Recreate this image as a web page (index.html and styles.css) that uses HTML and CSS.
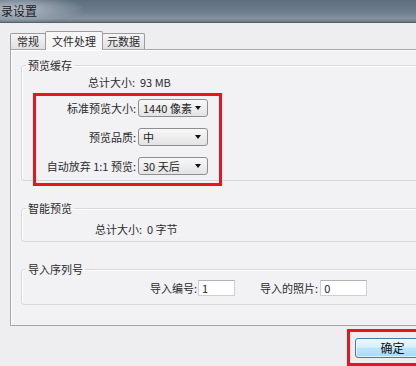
FILE: index.html
```html
<!DOCTYPE html>
<html lang="zh-CN">
<head>
<meta charset="utf-8">
<title>目录设置</title>
<link rel="stylesheet" href="styles.css">
</head>
<body>
<div class="window">
  <div class="titlebar"><span class="title">录设置</span></div>

  <div class="tabs">
    <div class="tab">常规</div>
    <div class="tab active">文件处理</div>
    <div class="tab tab-narrow">元数据</div>
  </div>

  <div class="panel">
    <fieldset class="group g1">
      <legend>预览缓存</legend>
      <div class="info-row"><span class="info-label">总计大小:</span><span>93 MB</span></div>
      <div class="highlight hl-form">
        <div class="form-grid">
          <span class="form-label">标准预览大小:</span>
          <div class="select"><span>1440 像素</span></div>
          <span class="form-label">预览品质:</span>
          <div class="select"><span>中</span></div>
          <span class="form-label">自动放弃 1:1 预览:</span>
          <div class="select"><span>30 天后</span></div>
        </div>
      </div>
    </fieldset>

    <fieldset class="group g2">
      <legend>智能预览</legend>
      <div class="info-row"><span class="info-label info-label-wide">总计大小:</span><span>0 字节</span></div>
    </fieldset>

    <fieldset class="group g3">
      <legend>导入序列号</legend>
      <div class="import-row">
        <span>导入编号:</span>
        <input class="field field-short" type="text" value="1">
        <span class="import-label2">导入的照片:</span>
        <input class="field field-long" type="text" value="0">
      </div>
    </fieldset>
  </div>

  <div class="footer">
    <div class="highlight hl-button">
      <button class="btn" type="button">确定</button>
    </div>
  </div>
</div>
</body>
</html>
```

FILE: styles.css
```css
html, body {
  margin: 0;
  padding: 0;
}

body {
  width: 416px;
  height: 366px;
  overflow: hidden;
  background: #eeeef0;
  font-family: "Noto Sans CJK SC", "Noto Sans", sans-serif;
  font-size: 11px;
  color: #2b2b2d;
}

.window {
  width: 416px;
  height: 366px;
  overflow: hidden;
}

.titlebar {
  height: 21px;
  border-bottom: 1px solid #56626e;
  display: flex;
  align-items: center;
  padding-bottom: 1px;
  box-sizing: content-box;
  background:
    radial-gradient(ellipse 70px 14px at 16px 9px, rgba(196, 203, 210, 0.85), rgba(196, 203, 210, 0)),
    linear-gradient(180deg, #5e6e7f 0%, #6c7b8b 50%, #8592a0 85%, #6b7783 100%);
}

.title {
  margin-left: 1px;
  font-size: 12px;
  line-height: 14px;
  color: #1c2026;
}

.tabs {
  display: flex;
  align-items: flex-end;
  height: 18px;
  margin: 8px 0 0 10px;
}

.tab {
  box-sizing: border-box;
  height: 16px;
  line-height: 15px;
  padding: 0 6px;
  border: 1px solid #9c9c9e;
  border-bottom: 0;
  border-radius: 2px 2px 0 0;
  background: linear-gradient(#f5f5f6, #e0e0e2);
  color: #2b2b2d;
}

.tab + .tab {
  margin-left: -1px;
}

.tab-narrow {
  padding: 0 4px;
}

.tab.active {
  height: 19px;
  line-height: 18px;
  margin-bottom: -1px;
  background: #f6f6f8;
  position: relative;
  z-index: 1;
}

.panel {
  box-sizing: border-box;
  width: 430px;
  height: 277px;
  margin-left: 10px;
  border: 1px solid #a6a6a8;
  box-shadow: inset 1px 1px 0 #ffffff;
  background: #f2f2f4;
  padding: 7px 0 0 10px;
}

.group {
  margin: 0;
  min-width: 0;
  padding: 0;
  border: 1px solid #d8d8db;
  border-radius: 3px;
  box-shadow: inset 1px 1px 0 #ffffff;
}

.group legend {
  margin-left: 4px;
  padding: 0 2px;
  line-height: 16px;
  color: #2b2b2d;
}

.g1 {
  padding-bottom: 0;
}

.g2 {
  margin-top: 19px;
  padding-bottom: 4px;
}

.g3 {
  margin-top: 19px;
  padding-bottom: 8px;
}

.info-row {
  display: flex;
  line-height: 16px;
  margin-top: 1px;
}

.g2 .info-row {
  margin-top: 5px;
}

.info-label {
  width: 113px;
  margin-right: 5px;
  text-align: right;
}

.info-label-wide {
  width: 120px;
}

.highlight {
  border: 3px solid #e6161d;
}

.hl-form {
  width: max-content;
  margin: 3px 0 -6px 11px;
  padding: 3px 11px 8px 0;
}

.form-grid {
  display: grid;
  grid-template-columns: 100px 70px;
  column-gap: 2px;
  row-gap: 11px;
  align-items: center;
}

.form-label {
  text-align: right;
  line-height: 16px;
  white-space: nowrap;
}

.select {
  box-sizing: border-box;
  height: 18px;
  display: flex;
  align-items: center;
  justify-content: space-between;
  padding: 0 6px 0 4px;
  border: 1px solid #8e8e90;
  border-radius: 3px;
  background: linear-gradient(#f8f8f8, #e3e3e4);
  color: #1e1e1e;
  line-height: 16px;
}

.select::after {
  content: "";
  width: 0;
  height: 0;
  border-left: 3.5px solid transparent;
  border-right: 3.5px solid transparent;
  border-top: 4px solid #111;
}

.import-row {
  display: flex;
  align-items: center;
  margin-top: 3px;
  padding-left: 128px;
  line-height: 16px;
}

.field {
  box-sizing: border-box;
  height: 16px;
  margin: 0 0 0 1px;
  padding: 0 0 0 3px;
  border: 1px solid #cfd0d3;
  border-top-color: #b0b2b7;
  background: #ffffff;
  font: inherit;
  line-height: 14px;
  color: #1e1e1e;
  outline: none;
}

.field-short {
  width: 37px;
}

.field-long {
  width: 47px;
  margin-left: 2px;
}

.import-label2 {
  margin-left: 25px;
}

.footer {
  display: flex;
  margin-top: 3px;
}

.hl-button {
  flex-shrink: 0;
  margin-left: 347px;
  padding: 6px 0 5px 5px;
  width: 90px;
}

.btn {
  display: block;
  box-sizing: border-box;
  width: 75px;
  height: 20px;
  padding: 0;
  border: 1px solid #3c7fb1;
  border-radius: 3px;
  background: linear-gradient(#eaf6fd 0%, #d9f0fc 45%, #bee6fd 50%, #a7d9f5 100%);
  box-shadow: inset 0 0 0 1px rgba(255, 255, 255, 0.6);
  font-family: inherit;
  font-size: 12px;
  line-height: 18px;
  color: #111;
}
```
